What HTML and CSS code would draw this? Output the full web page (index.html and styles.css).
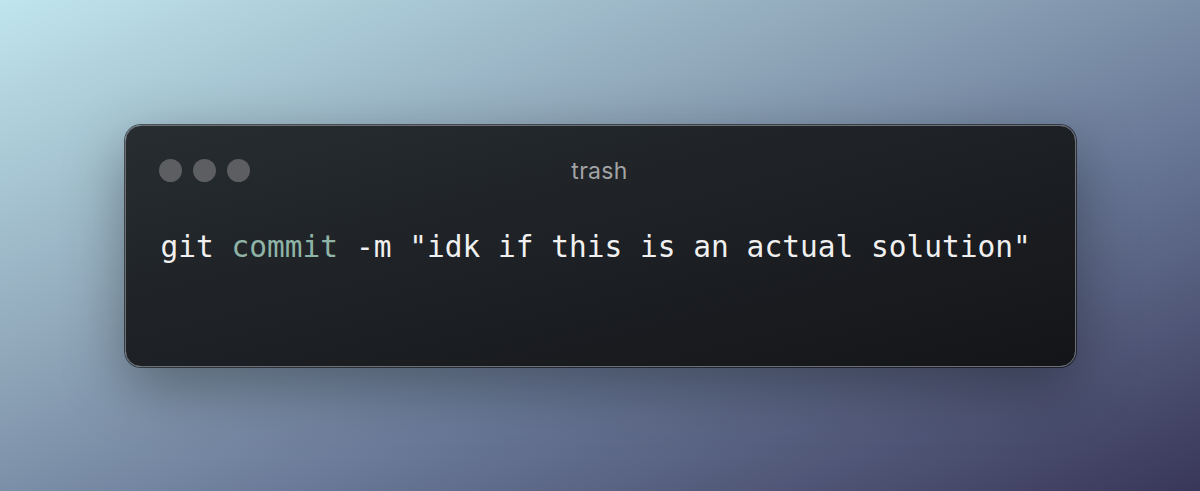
FILE: index.html
```html
<!DOCTYPE html>
<html>
<head>
<meta charset="utf-8">
<link rel="stylesheet" href="styles.css">
</head>
<body>
<div class="stage">
  <div class="window">
    <div class="header">
      <div class="dots">
        <span class="dot"></span><span class="dot"></span><span class="dot"></span>
      </div>
      <div class="title">trash</div>
      <div class="spacer"></div>
    </div>
    <pre class="code"><span class="plain">git </span><span class="kw">commit</span><span class="plain"> -m "idk if this is an actual solution"</span></pre>
  </div>
</div>
</body>
</html>
```

FILE: styles.css
```css
html, body {
  margin: 0;
  padding: 0;
  width: 1200px;
  height: 491px;
  overflow: hidden;
}

.stage {
  width: 1200px;
  height: 491px;
  display: flex;
  align-items: center;
  justify-content: center;
  background: linear-gradient(to bottom right, #c0e5ed 0%, #8ea5b8 38%, #6a7a98 62%, #393759 100%);
}

.window {
  box-sizing: border-box;
  width: 951px;
  height: 242px;
  border-radius: 16px;
  background: linear-gradient(to bottom right, #272d30 0%, #1d2024 50%, #141519 100%);
  border: 1px solid #6c7075;
  box-shadow: 0 0 0 1px rgba(0, 0, 0, 0.55), 0 20px 60px rgba(0, 0, 0, 0.35);
  padding: 33px 34px 0 33px;
}

.header {
  display: grid;
  grid-template-columns: 1fr auto 1fr;
  align-items: center;
  height: 24px;
}

.dots {
  display: flex;
  gap: 11px;
}

.dot {
  width: 23px;
  height: 23px;
  border-radius: 50%;
  background: #5d5e61;
}

.title {
  font-family: Inter, "Noto Sans", sans-serif;
  font-size: 23px;
  color: #a2a3a5;
  line-height: 24px;
  letter-spacing: 0.3px;
}

.code {
  margin: 46px 0 0 2px;
  font-family: "DejaVu Sans Mono", "Liberation Mono", monospace;
  font-size: 29.5px;
  line-height: 36px;
  color: #f0f0f0;
  white-space: pre;
}

.kw {
  color: #8fb4a7;
}
```
